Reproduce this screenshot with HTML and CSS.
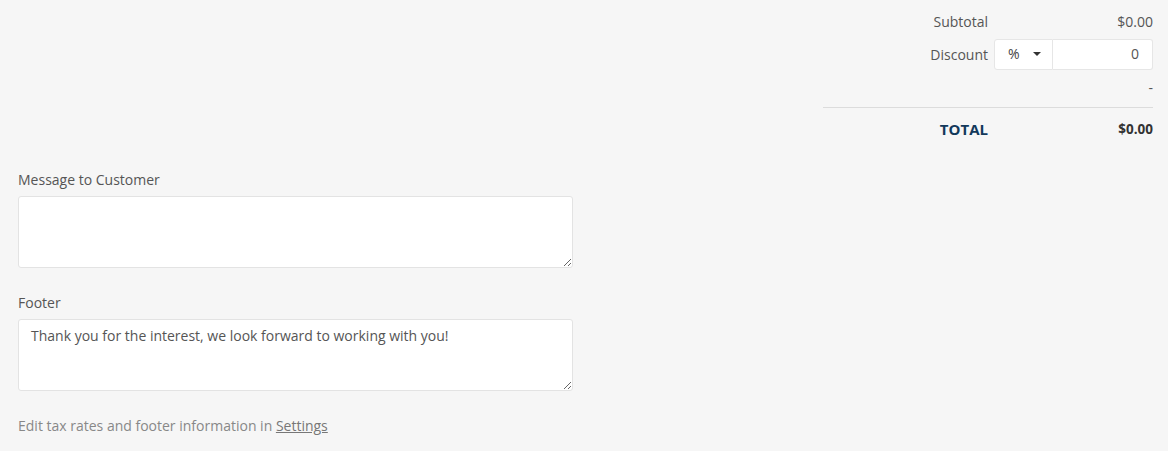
FILE: index.html
```html
<!DOCTYPE html>
<html>
<head>
<meta charset="utf-8">
<link rel="stylesheet" href="styles.css">
</head>
<body>
<div class="page">
  <div class="totals-wrap">
    <div class="totals">
      <div class="row">
        <div class="lbl">Subtotal</div>
        <div class="val">$0.00</div>
      </div>
      <div class="row">
        <div class="lbl">Discount</div>
        <div class="val">
          <div class="discount">
            <div class="dsel">% <span class="caret"></span></div>
            <div class="dinput">0</div>
          </div>
        </div>
      </div>
      <div class="row">
        <div class="lbl"></div>
        <div class="val">-</div>
      </div>
      <div class="sep"></div>
      <div class="row total">
        <div class="lbl">TOTAL</div>
        <div class="val">$0.00</div>
      </div>
    </div>
  </div>
  <div class="fields">
    <div class="field">
      <label class="flabel">Message to Customer</label>
      <textarea class="ta"></textarea>
    </div>
    <div class="field">
      <label class="flabel">Footer</label>
      <textarea class="ta">Thank you for the interest, we look forward to working with you!</textarea>
    </div>
    <p class="note">Edit tax rates and footer information in <a href="#" class="link">Settings</a></p>
  </div>
</div>
</body>
</html>
```
FILE: styles.css
```css
html, body {
  margin: 0;
  padding: 0;
  background: #f6f6f6;
}
body {
  font-family: "Open Sans", "Liberation Sans", sans-serif;
  font-size: 14px;
  line-height: 20px;
  color: #555;
}
.page {
  padding: 5px 15px 0 18px;
}
.totals-wrap {
  display: flex;
  justify-content: flex-end;
}
.totals {
  width: 330px;
}
.row {
  display: grid;
  grid-template-columns: 165px 165px;
  height: 33px;
  align-items: center;
}
.lbl {
  text-align: right;
  color: #555;
}
.val {
  text-align: right;
  color: #555;
}
.discount {
  display: flex;
  margin-left: 6px;
  height: 31px;
  margin-top: -1px;
}
.dsel {
  width: 59px;
  box-sizing: border-box;
  background: #fff;
  border: 1px solid #e6e6e6;
  border-radius: 3px 0 0 3px;
  display: flex;
  align-items: center;
  padding-left: 13px;
  color: #444;
  text-align: left;
}
.caret {
  display: inline-block;
  width: 0;
  height: 0;
  border-left: 4px solid transparent;
  border-right: 4px solid transparent;
  border-top: 4px solid #333;
  margin-left: 13px;
}
.dinput {
  flex: 1;
  background: #fff;
  border: 1px solid #e6e6e6;
  border-left: none;
  border-radius: 0 3px 3px 0;
  display: flex;
  align-items: center;
  justify-content: flex-end;
  padding-right: 13px;
  color: #555;
}
.sep {
  margin-top: 3px;
  border-top: 1px solid #dcdcdc;
}
.row.total {
  height: 42px;
}
.row.total .lbl {
  color: #12395b;
  font-weight: 700;
  font-size: 15px;
}
.row.total .val {
  color: #333;
  font-weight: 700;
  font-size: 13.5px;
}
.fields {
  width: 555px;
  margin-top: 20px;
}
.field {
  margin-bottom: 25px;
}
.flabel {
  display: block;
  margin-bottom: 6px;
  color: #555;
}
.ta {
  display: block;
  width: 555px;
  height: 72px;
  box-sizing: border-box;
  border: 1px solid #e3e3e3;
  border-radius: 3px;
  background: #fff;
  padding: 6px 12px;
  font-family: "Open Sans", "Liberation Sans", sans-serif;
  font-size: 14px;
  line-height: 20px;
  color: #555;
  margin: 0;
}
.note {
  margin: 2px 0 0;
  color: #888;
}
.link {
  color: #777;
  text-decoration: underline;
}
```
